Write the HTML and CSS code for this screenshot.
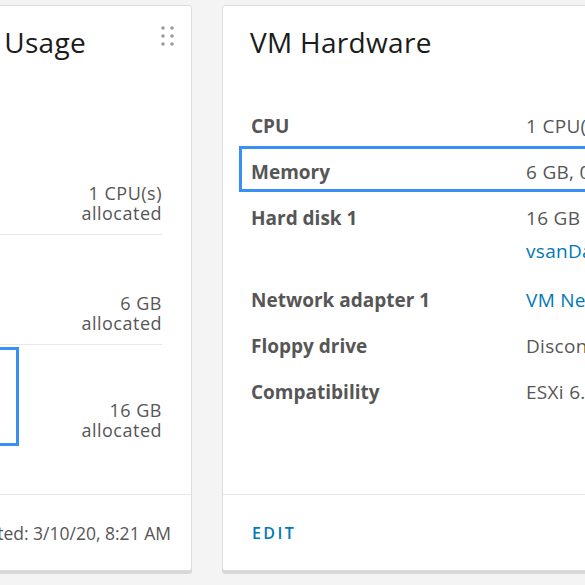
FILE: index.html
```html
<!DOCTYPE html>
<html lang="en">
<head>
<meta charset="utf-8">
<title>VM Summary</title>
<link rel="stylesheet" href="styles.css">
</head>
<body>
<div class="page">
  <section class="card card-usage">
    <header class="card-header">
      <h2 class="card-title title-end">Capacity and Usage</h2>
      <svg class="grip" width="14" height="21" viewBox="0 0 14 21" aria-hidden="true">
        <circle cx="2" cy="2" r="1.8"/><circle cx="11" cy="2" r="1.8"/>
        <circle cx="2" cy="10" r="1.8"/><circle cx="11" cy="10" r="1.8"/>
        <circle cx="2" cy="18" r="1.8"/><circle cx="11" cy="18" r="1.8"/>
      </svg>
    </header>
    <div class="usage-body">
      <div class="usage-row">
        <div class="usage-chart"></div>
        <div class="usage-value"><div>1 CPU(s)</div><div>allocated</div></div>
      </div>
      <div class="usage-row">
        <div class="usage-chart"></div>
        <div class="usage-value"><div>6 GB</div><div>allocated</div></div>
      </div>
      <div class="usage-row last">
        <div class="usage-chart"><div class="highlight"></div></div>
        <div class="usage-value"><div>16 GB</div><div>allocated</div></div>
      </div>
    </div>
    <footer class="card-footer footer-end">Last updated: 3/10/20, 8:21 AM</footer>
  </section>

  <section class="card card-hw">
    <header class="card-header">
      <h2 class="card-title">VM Hardware</h2>
    </header>
    <div class="hw-body">
      <div class="hw-row">
        <div class="hw-label">CPU</div>
        <div class="hw-value">1 CPU(s), 40 MHz used</div>
      </div>
      <div class="hw-row selected">
        <div class="hw-label">Memory</div>
        <div class="hw-value">6 GB, 0.06 GB memory active</div>
      </div>
      <div class="hw-row">
        <div class="hw-label">Hard disk 1</div>
        <div class="hw-value">
          <div>16 GB | Thin Provision</div>
          <div class="second"><a class="link" href="#">vsanDatastore</a></div>
        </div>
      </div>
      <div class="hw-row">
        <div class="hw-label">Network adapter 1</div>
        <div class="hw-value"><a class="link" href="#">VM Network (connected)</a></div>
      </div>
      <div class="hw-row">
        <div class="hw-label">Floppy drive</div>
        <div class="hw-value">Disconnected</div>
      </div>
      <div class="hw-row">
        <div class="hw-label">Compatibility</div>
        <div class="hw-value">ESXi 6.7 and later (VM version 14)</div>
      </div>
    </div>
    <footer class="card-footer">
      <button class="btn-link" type="button">EDIT</button>
    </footer>
  </section>
</div>
</body>
</html>
```

FILE: styles.css
```css
html, body {
  margin: 0;
  padding: 0;
}
body {
  background: #f4f4f4;
  font-family: "Open Sans", "Noto Sans", sans-serif;
  color: #565656;
  width: 585px;
  height: 585px;
  overflow: hidden;
}
.page {
  display: flex;
  gap: 30px;
  margin-left: -268px;
  padding-top: 5px;
}
.card {
  flex: none;
  box-sizing: border-box;
  height: 566px;
  background: #fff;
  border: 1px solid #dcdcdc;
  border-radius: 3px;
  box-shadow: 0 3px 0 0 #d8d8d8;
  display: flex;
  flex-direction: column;
  overflow: hidden;
}
.card-usage { width: 460px; }
.card-hw { width: 420px; }

.card-header {
  box-sizing: border-box;
  height: 94px;
  display: flex;
  align-items: flex-start;
  padding: 0 16px 0 27px;
}
.card-title {
  margin: 0;
  padding-top: 19px;
  font-size: 28px;
  line-height: 34px;
  font-weight: 400;
  color: #1b1b1b;
  letter-spacing: 0.3px;
  white-space: nowrap;
}
.title-end {
  flex: 1;
  text-align: right;
  padding-right: 75px;
}
.grip {
  margin-top: 20px;
  fill: #9a9a9a;
}

/* usage card */
.usage-body {
  flex: 1;
  padding: 25px 29px 0 18px;
}
.usage-row {
  box-sizing: border-box;
  height: 110px;
  display: grid;
  grid-template-columns: 1fr auto;
  grid-template-rows: minmax(0, 1fr);
  align-items: end;
  border-bottom: 1px solid #e8e8e8;
  padding-bottom: 11px;
}
.usage-row.last {
  border-bottom: none;
  padding-bottom: 15px;
}
.usage-chart {
  align-self: stretch;
}
.highlight {
  box-sizing: border-box;
  width: 268px;
  height: 99px;
  margin-top: 2px;
  border: 3px solid #3a8ff5;
}
.usage-value {
  text-align: right;
  font-size: 18px;
  line-height: 20px;
  letter-spacing: 0.5px;
  color: #565656;
  white-space: nowrap;
}

/* footer */
.card-footer {
  box-sizing: border-box;
  height: 76px;
  border-top: 1px solid #e8e8e8;
  display: flex;
  align-items: center;
  padding: 0 29px;
  font-size: 18px;
  color: #565656;
  white-space: nowrap;
}
.footer-end {
  justify-content: flex-end;
  padding-right: 20px;
  font-size: 17.5px;
}
.btn-link {
  background: none;
  border: none;
  padding: 0;
  font-family: inherit;
  font-size: 16px;
  font-weight: 600;
  letter-spacing: 2.4px;
  color: #0079b8;
  cursor: pointer;
}

/* hardware card */
.hw-body {
  flex: 1;
  padding: 0 0 0 16px;
}
.hw-row {
  display: grid;
  grid-template-columns: 275px 1fr;
  border: 3px solid transparent;
  border-right: none;
  padding: 11px 9px 5px;
  font-size: 19px;
  line-height: 24px;
}
.hw-row.selected {
  border-color: #3a8ff5;
}
.hw-label {
  font-weight: 700;
  color: #565656;
  white-space: nowrap;
}
.hw-value {
  color: #565656;
  letter-spacing: 0.3px;
  white-space: nowrap;
}
.hw-value .second {
  margin-top: 9px;
  margin-bottom: 3px;
}
.link {
  color: #0079b8;
  text-decoration: none;
}
```
